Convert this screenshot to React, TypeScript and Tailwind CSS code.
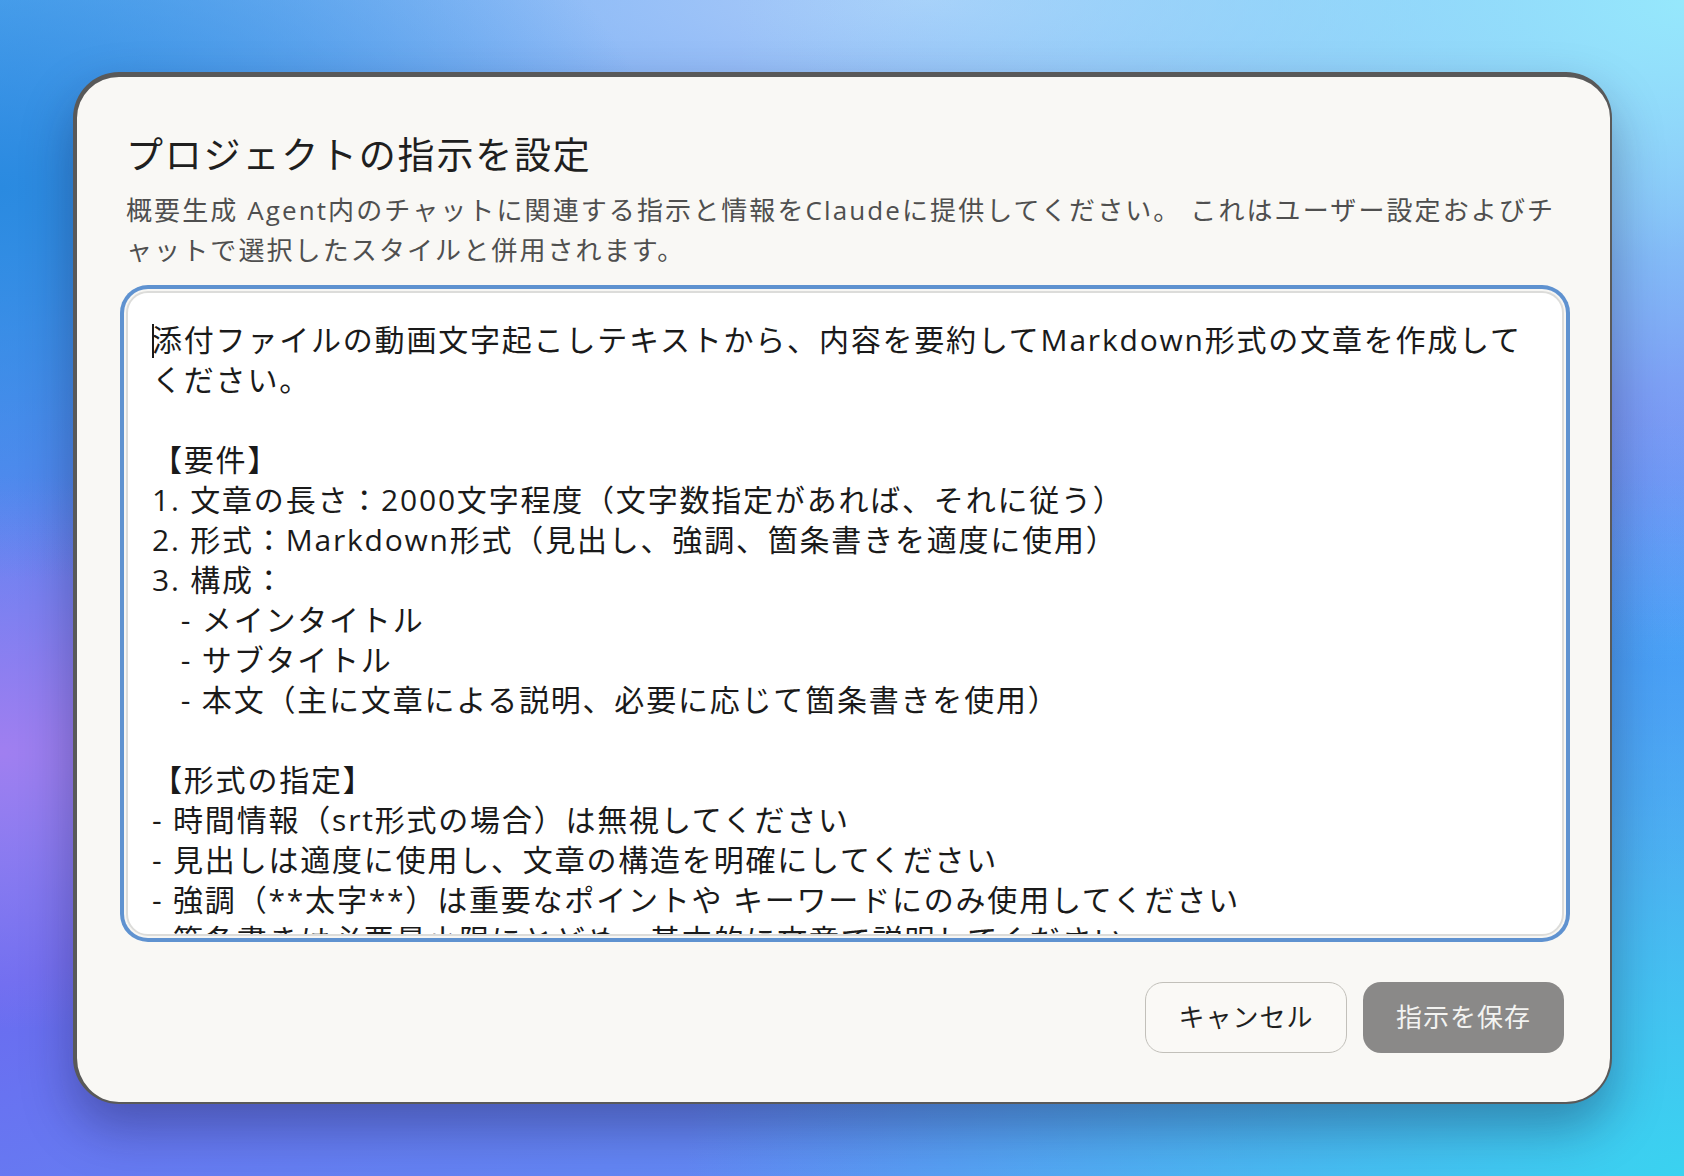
import { useEffect, useRef, useState } from "react";

const INSTRUCTIONS = `添付ファイルの動画文字起こしテキストから、内容を要約してMarkdown形式の文章を作成してください。

【要件】
1. 文章の長さ：2000文字程度（文字数指定があれば、それに従う）
2. 形式：Markdown形式（見出し、強調、箇条書きを適度に使用）
3. 構成：
   - メインタイトル
   - サブタイトル
   - 本文（主に文章による説明、必要に応じて箇条書きを使用）

【形式の指定】
- 時間情報（srt形式の場合）は無視してください
- 見出しは適度に使用し、文章の構造を明確にしてください
- 強調（**太字**）は重要なポイントや キーワードにのみ使用してください
- 箇条書きは必要最小限にとどめ、基本的に文章で説明してください
- 専門用語には必要に応じて簡単な説明を加えてください`;

export default function App() {
  const [value, setValue] = useState(INSTRUCTIONS);
  const ref = useRef<HTMLTextAreaElement>(null);

  useEffect(() => {
    const el = ref.current;
    if (!el) return;
    el.focus();
    el.setSelectionRange(0, 0);
    el.scrollTop = 0;
  }, []);

  return (
    <div className="min-h-screen w-full overflow-hidden pt-[72px] pl-[73px] font-['Open_Sans','Noto_Sans_CJK_JP',sans-serif] bg-[radial-gradient(ellipse_at_0%_16%,#2a8ae0_0%,transparent_28%),radial-gradient(ellipse_at_0%_64%,#a07ff0_0%,transparent_26%),radial-gradient(ellipse_at_100%_0%,#96e8fc_0%,transparent_40%),radial-gradient(ellipse_at_100%_100%,#3ad2f0_0%,transparent_42%),radial-gradient(ellipse_at_100%_55%,#4d8ff8_0%,transparent_25%),radial-gradient(ellipse_120%_45%_at_55%_0%,#acccf9_0%,transparent_60%),linear-gradient(160deg,#4aa6f2_0%,#6a6cf0_55%,#5c9ef6_100%)]">
      <div className="w-[1539px] rounded-[46px] border-t-[5px] border-l-[4px] border-r-[2px] border-b-[2px] border-[#595959] bg-[#f9f8f5] pl-[49px] pr-[46px] pt-[54px] pb-[49px] shadow-[0_24px_50px_rgba(20,20,60,0.35)]">
        <h1 className="text-[37px] leading-[48px] tracking-[1.8px] text-[#1f1f1f]">
          プロジェクトの指示を設定
        </h1>
        <p className="mt-[11px] text-[26px] leading-[40px] tracking-[2.1px] text-[#4f4f4f]">
          概要生成 Agent内のチャットに関連する指示と情報をClaudeに提供してください。 これはユーザー設定およびチャットで選択したスタイルと併用されます。
        </p>

        <div className="relative mt-[21px]">
          <textarea
            ref={ref}
            value={value}
            onChange={(e) => setValue(e.target.value)}
            className="block h-[645px] w-full resize-none overflow-hidden rounded-[22px] border-2 border-[#dcdcda] bg-white pl-[24px] pr-[21px] pt-[27px] pb-0 text-[30px] leading-[40px] tracking-[1.8px] text-[#1a1a1a] caret-transparent outline-none ring-4 ring-[#5f92d0] ring-offset-2 ring-offset-[#f7f6f3]"
          />
          {/* caret */}
          <span className="pointer-events-none absolute left-[26px] top-[33px] h-[34px] w-[2px] bg-[#1a1a1a]" />
        </div>

        <div className="mt-[46px] flex justify-end gap-4">
          <button className="h-[71px] w-[202px] rounded-[18px] border border-[#c2c0ba] bg-[#faf9f6] text-[26px] tracking-[1px] text-[#1f1f1f]">
            キャンセル
          </button>
          <button className="h-[71px] w-[201px] rounded-[18px] bg-[#8a8988] text-[26px] tracking-[1px] text-[#f3f3f1]">
            指示を保存
          </button>
        </div>
      </div>
    </div>
  );
}
